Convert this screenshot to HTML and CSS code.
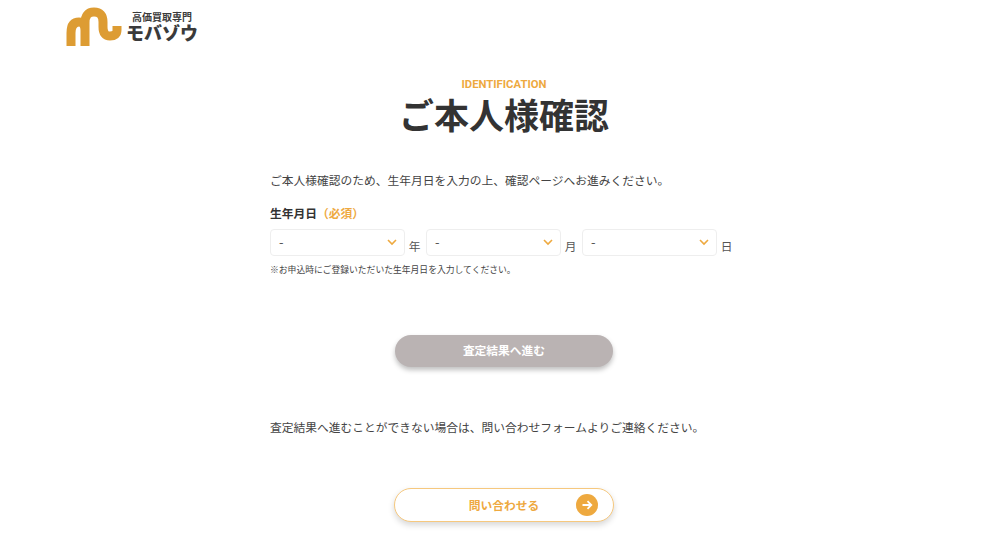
FILE: index.html
```html
<!DOCTYPE html>
<html lang="ja">
<head>
  <meta charset="UTF-8">
  <meta name="viewport" content="width=device-width, initial-scale=1.0">
  <title>ご本人様確認</title>
  <link rel="stylesheet" href="styles.css">
</head>
<body>
  <header class="header">
    <svg class="logo-mark" width="56" height="40" viewBox="0 0 56 40">
      <path d="M5 39V26Q5 15 13 15Q19 15 19 24V39M19 24V16Q19 5 28 5Q37 5 37 15V20Q37 29 44 29Q51 29 51 23V19" fill="none" stroke="#dd9c33" stroke-width="9"/>
    </svg>
    <div class="logo-text">
      <div class="logo-sub">高価買取専門</div>
      <div class="logo-name">モバゾウ</div>
    </div>
  </header>

  <main class="container">
    <p class="eyebrow">IDENTIFICATION</p>
    <h1 class="title">ご本人様確認</h1>

    <p class="lead">ご本人様確認のため、生年月日を入力の上、確認ページへお進みください。</p>

    <div class="field-label">生年月日<span class="required">（必須）</span></div>
    <div class="birth-row">
      <div class="select-box">
        <span>-</span>
        <svg class="chevron" width="12" height="8" viewBox="0 0 12 8"><path d="M2 2L6 6L10 2" fill="none" stroke="#eea93f" stroke-width="1.6"/></svg>
      </div>
      <span class="unit">年</span>
      <div class="select-box">
        <span>-</span>
        <svg class="chevron" width="12" height="8" viewBox="0 0 12 8"><path d="M2 2L6 6L10 2" fill="none" stroke="#eea93f" stroke-width="1.6"/></svg>
      </div>
      <span class="unit">月</span>
      <div class="select-box">
        <span>-</span>
        <svg class="chevron" width="12" height="8" viewBox="0 0 12 8"><path d="M2 2L6 6L10 2" fill="none" stroke="#eea93f" stroke-width="1.6"/></svg>
      </div>
      <span class="unit">日</span>
    </div>
    <p class="note">※お申込時にご登録いただいた生年月日を入力してください。</p>

    <button class="btn-submit" type="button">査定結果へ進む</button>

    <p class="lead lead-contact">査定結果へ進むことができない場合は、問い合わせフォームよりご連絡ください。</p>

    <a class="btn-contact" href="#">
      問い合わせる
      <span class="btn-arrow">
        <svg width="12" height="12" viewBox="0 0 12 12"><path d="M1.5 6H10M6.5 2.2L10.3 6L6.5 9.8" fill="none" stroke="#fff" stroke-width="1.8"/></svg>
      </span>
    </a>
  </main>
</body>
</html>
```

FILE: styles.css
```css
body {
  margin: 0;
  font-family: "Noto Sans CJK JP", "Noto Sans", sans-serif;
  color: #333;
  background: #fff;
  height: 548px;
  overflow: hidden;
}
.header {
  display: flex;
  align-items: flex-start;
  padding: 7px 0 0 66px;
  height: 68px;
  box-sizing: border-box;
}
.logo-mark {
  display: block;
}
.logo-text {
  margin: 3px 0 0 4px;
  color: #3a3a3a;
  text-align: center;
}
.logo-sub {
  font-size: 10px;
  font-weight: 700;
  line-height: 13px;
}
.logo-name {
  font-size: 18px;
  font-weight: 900;
  line-height: 18px;
  white-space: nowrap;
}
.container {
  width: 468px;
  margin-left: 270px;
}
.eyebrow {
  margin: 0;
  padding-top: 9px;
  text-align: center;
  font-family: "Roboto", sans-serif;
  font-size: 11.3px;
  font-weight: 700;
  line-height: 16px;
  color: #eea93f;
}
.title {
  margin: -3px 0 0;
  text-align: center;
  font-size: 35px;
  font-weight: 700;
  line-height: 48px;
  color: #333;
}
.lead {
  margin: 32px 0 0;
  font-size: 11.75px;
  line-height: 20px;
  white-space: nowrap;
  color: #444;
}
.field-label {
  margin-top: 13px;
  font-size: 11.75px;
  font-weight: 700;
  line-height: 20px;
}
.required {
  color: #eea93f;
}
.birth-row {
  display: flex;
  align-items: flex-start;
  margin-top: 6px;
}
.select-box {
  display: flex;
  align-items: center;
  justify-content: space-between;
  width: 135px;
  height: 27px;
  box-sizing: border-box;
  padding: 0 6px 2px 8px;
  border: 1px solid #eeeeee;
  border-radius: 4px;
  font-size: 13px;
  color: #555;
}
.unit {
  width: 21px;
  box-sizing: border-box;
  padding: 8px 2px 0 0;
  text-align: center;
  font-size: 11.7px;
  line-height: 18px;
  color: #555;
}
.note {
  margin: 7px 0 0;
  font-size: 8.8px;
  line-height: 14px;
  color: #444;
  white-space: nowrap;
}
.btn-submit {
  display: block;
  width: 218px;
  height: 32px;
  margin: 58px auto 0 125px;
  padding: 0 0 3px;
  border: none;
  border-radius: 16px;
  background: #bab3b3;
  color: #fff;
  font-family: inherit;
  font-size: 11.75px;
  font-weight: 700;
  box-shadow: 0 3px 5px rgba(0, 0, 0, 0.25);
}
.lead-contact {
  margin-top: 50px;
}
.btn-contact {
  position: relative;
  display: flex;
  align-items: center;
  justify-content: center;
  width: 220px;
  height: 34px;
  box-sizing: border-box;
  margin: 51px 0 0 124px;
  padding-bottom: 2px;
  border: 1px solid #f6c87e;
  border-radius: 17px;
  background: #fff;
  color: #eea93f;
  font-size: 11.75px;
  font-weight: 700;
  text-decoration: none;
  box-shadow: 0 3px 6px rgba(0, 0, 0, 0.16);
}
.btn-arrow {
  position: absolute;
  right: 15px;
  top: 5px;
  display: flex;
  align-items: center;
  justify-content: center;
  width: 22px;
  height: 22px;
  border-radius: 50%;
  background: #eea93f;
}
```
